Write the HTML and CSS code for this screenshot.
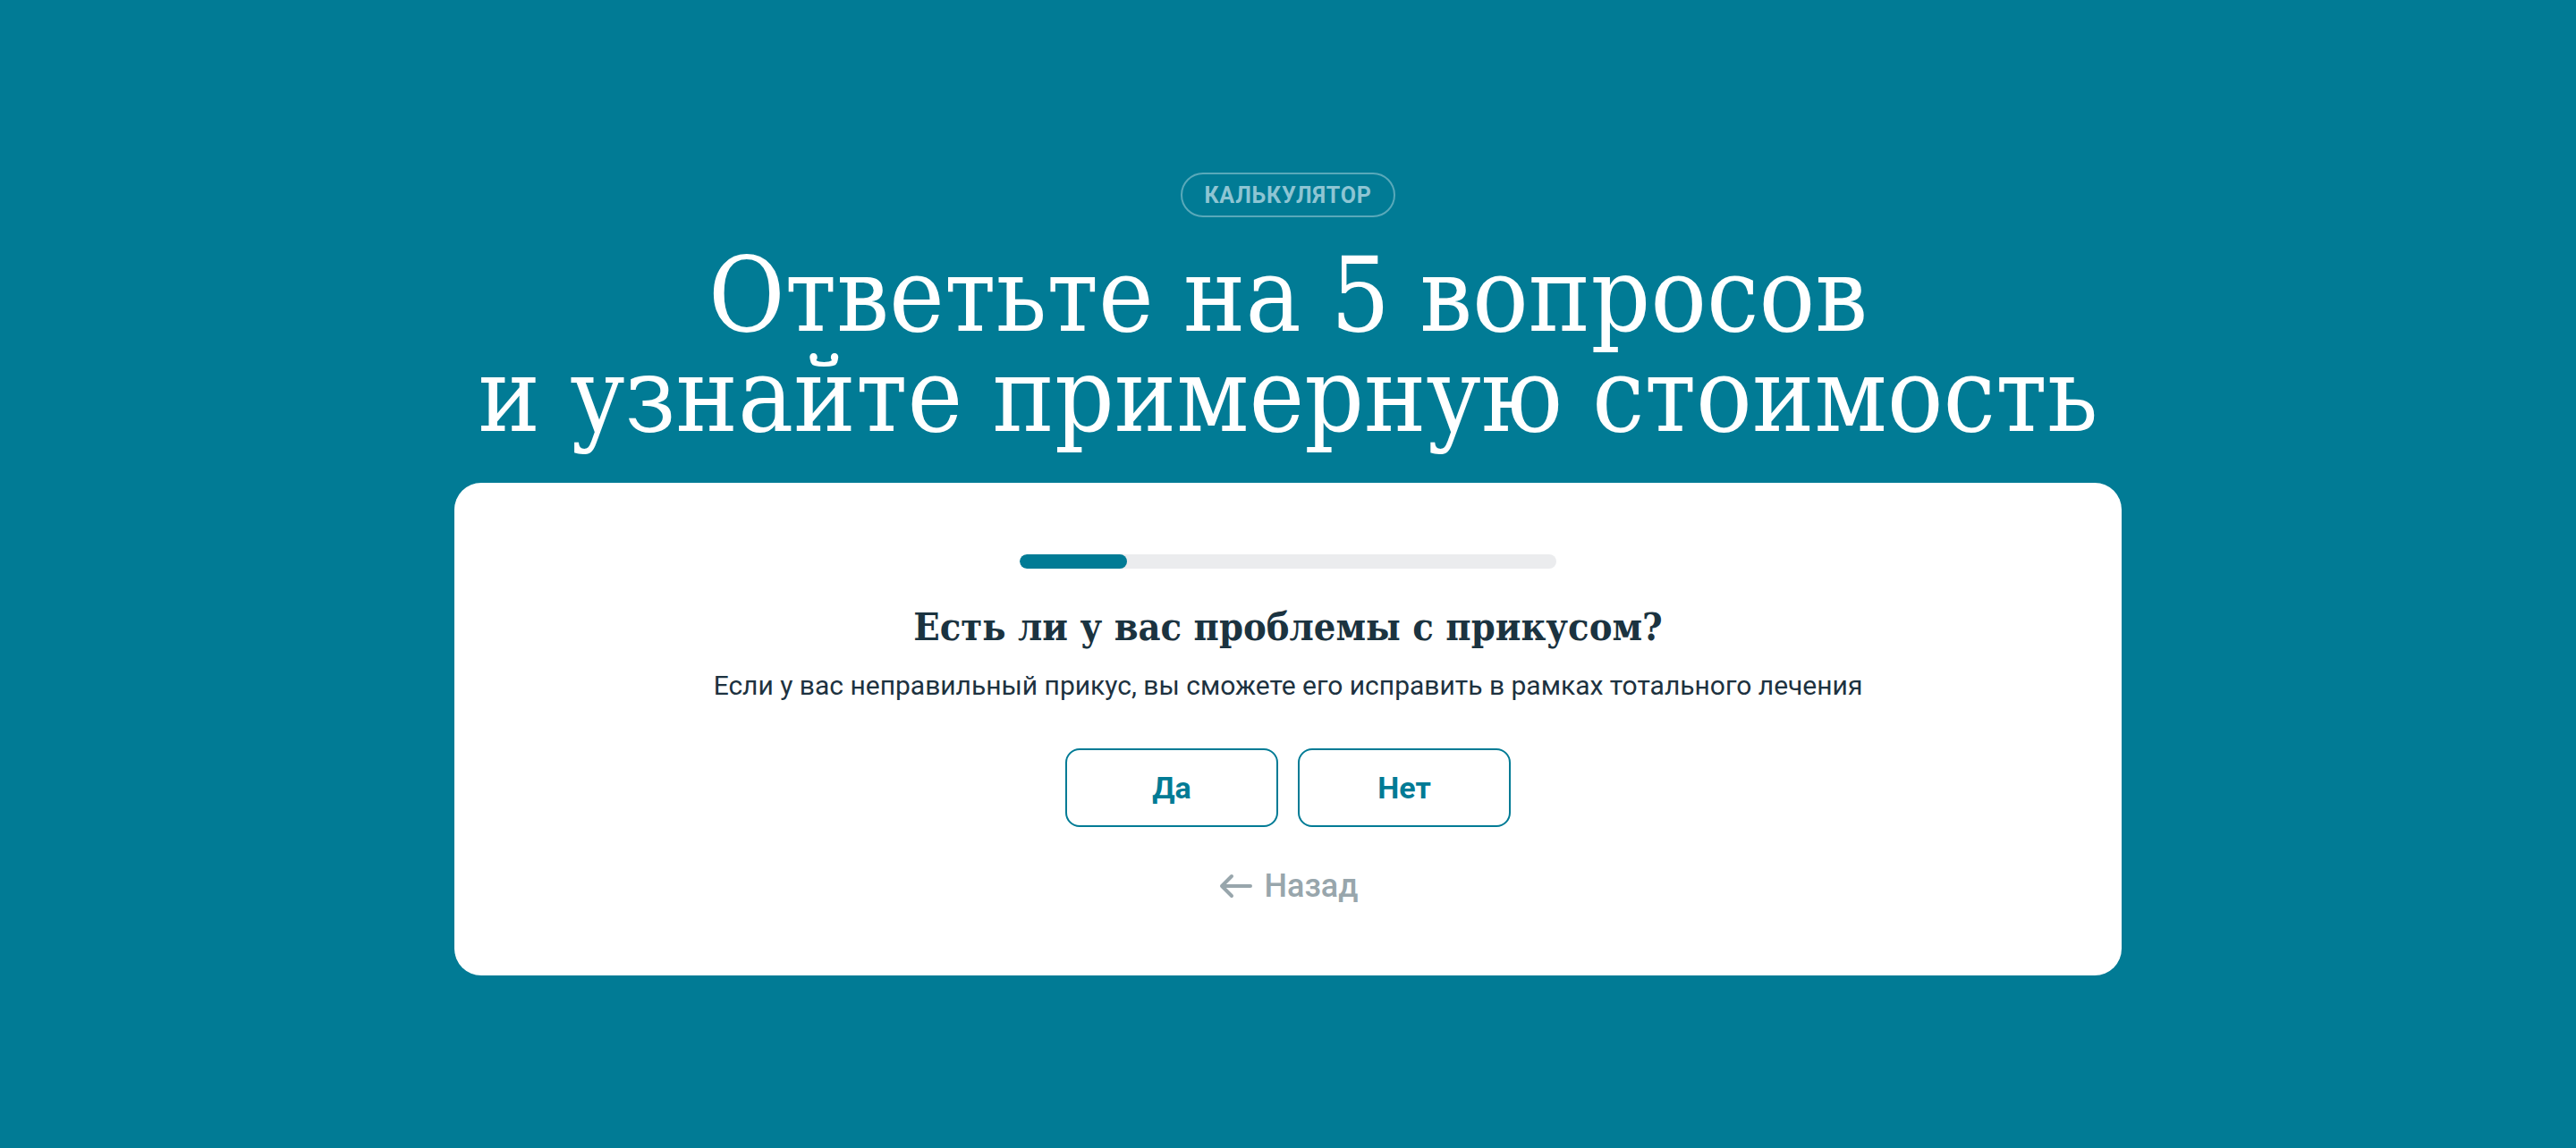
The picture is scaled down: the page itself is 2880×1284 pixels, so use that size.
FILE: index.html
```html
<!DOCTYPE html>
<html lang="ru">
<head>
<meta charset="utf-8">
<title>Калькулятор</title>
<link rel="stylesheet" href="styles.css">
</head>
<body>
<main class="page">
  <div class="badge">КАЛЬКУЛЯТОР</div>
  <h1 class="title"><span class="title-line">Ответьте на 5 вопросов</span><span class="title-line">и узнайте примерную стоимость</span></h1>
  <section class="card">
    <div class="progress"><div class="progress-fill" style="width:20%"></div></div>
    <h2 class="question">Есть ли у вас проблемы с прикусом?</h2>
    <p class="hint">Если у вас неправильный прикус, вы сможете его исправить в рамках тотального лечения</p>
    <div class="answers">
      <button class="answer">Да</button>
      <button class="answer">Нет</button>
    </div>
    <button class="back">
      <svg class="back-icon" viewBox="0 0 40 30" width="40" height="30" aria-hidden="true"><path d="M37 15H5M16 4L5 15l11 11" fill="none" stroke="currentColor" stroke-width="4" stroke-linecap="round" stroke-linejoin="round"/></svg>
      <span>Назад</span>
    </button>
  </section>
</main>
</body>
</html>
```
FILE: styles.css
```css
html, body {
  margin: 0;
  padding: 0;
}
body {
  background: #017b95;
  min-height: 1284px;
  font-family: Roboto, "Noto Sans", sans-serif;
}
.page {
  display: flex;
  flex-direction: column;
  align-items: center;
  padding-top: 193px;
}
.badge {
  box-sizing: border-box;
  height: 50px;
  display: flex;
  align-items: center;
  padding: 0 24px;
  border: 2px solid rgba(255, 255, 255, 0.35);
  border-radius: 25px;
  color: #8ec5d3;
  font-weight: 700;
  font-size: 25px;
  letter-spacing: 0.8px;
}
.title {
  margin: 31px 0 0;
  color: #ffffff;
  text-align: center;
  font-family: "DejaVu Serif Condensed", "DejaVu Serif", serif;
  font-stretch: condensed;
  font-weight: 400;
  font-size: 116px;
  line-height: 112px;
  letter-spacing: 0;
  display: flex;
  flex-direction: column;
  align-items: center;
}
.title-line {
  display: block;
  height: 112px;
}
.card {
  box-sizing: border-box;
  width: 1864px;
  margin-top: 42px;
  background: #ffffff;
  border-radius: 30px;
  padding: 80px 0 79px;
  display: flex;
  flex-direction: column;
  align-items: center;
}
.progress {
  width: 600px;
  height: 16px;
  border-radius: 8px;
  background: #ebecee;
  overflow: hidden;
}
.progress-fill {
  height: 100%;
  border-radius: 8px;
  background: #017b95;
}
.question {
  margin: 39px 0 0;
  color: #1b3340;
  font-family: "DejaVu Serif Condensed", "DejaVu Serif", serif;
  font-stretch: condensed;
  font-weight: 700;
  font-size: 43px;
  line-height: 53px;
}
.hint {
  margin: 20px 0 0;
  color: #1d3240;
  font-size: 30px;
  line-height: 38px;
}
.answers {
  display: flex;
  gap: 22px;
  margin-top: 51px;
}
.answer {
  box-sizing: border-box;
  width: 238px;
  height: 88px;
  border: 2px solid #017b95;
  border-radius: 16px;
  background: #ffffff;
  color: #017b95;
  font-family: Roboto, "Noto Sans", sans-serif;
  font-weight: 700;
  font-size: 34px;
  cursor: pointer;
}
.back {
  margin-top: 45px;
  display: flex;
  align-items: center;
  gap: 12px;
  height: 42px;
  padding: 0;
  border: 0;
  background: none;
  color: #98a6ac;
  font-family: Roboto, "Noto Sans", sans-serif;
  font-weight: 500;
  font-size: 36px;
  cursor: pointer;
}
.back-icon {
  display: block;
}
```
